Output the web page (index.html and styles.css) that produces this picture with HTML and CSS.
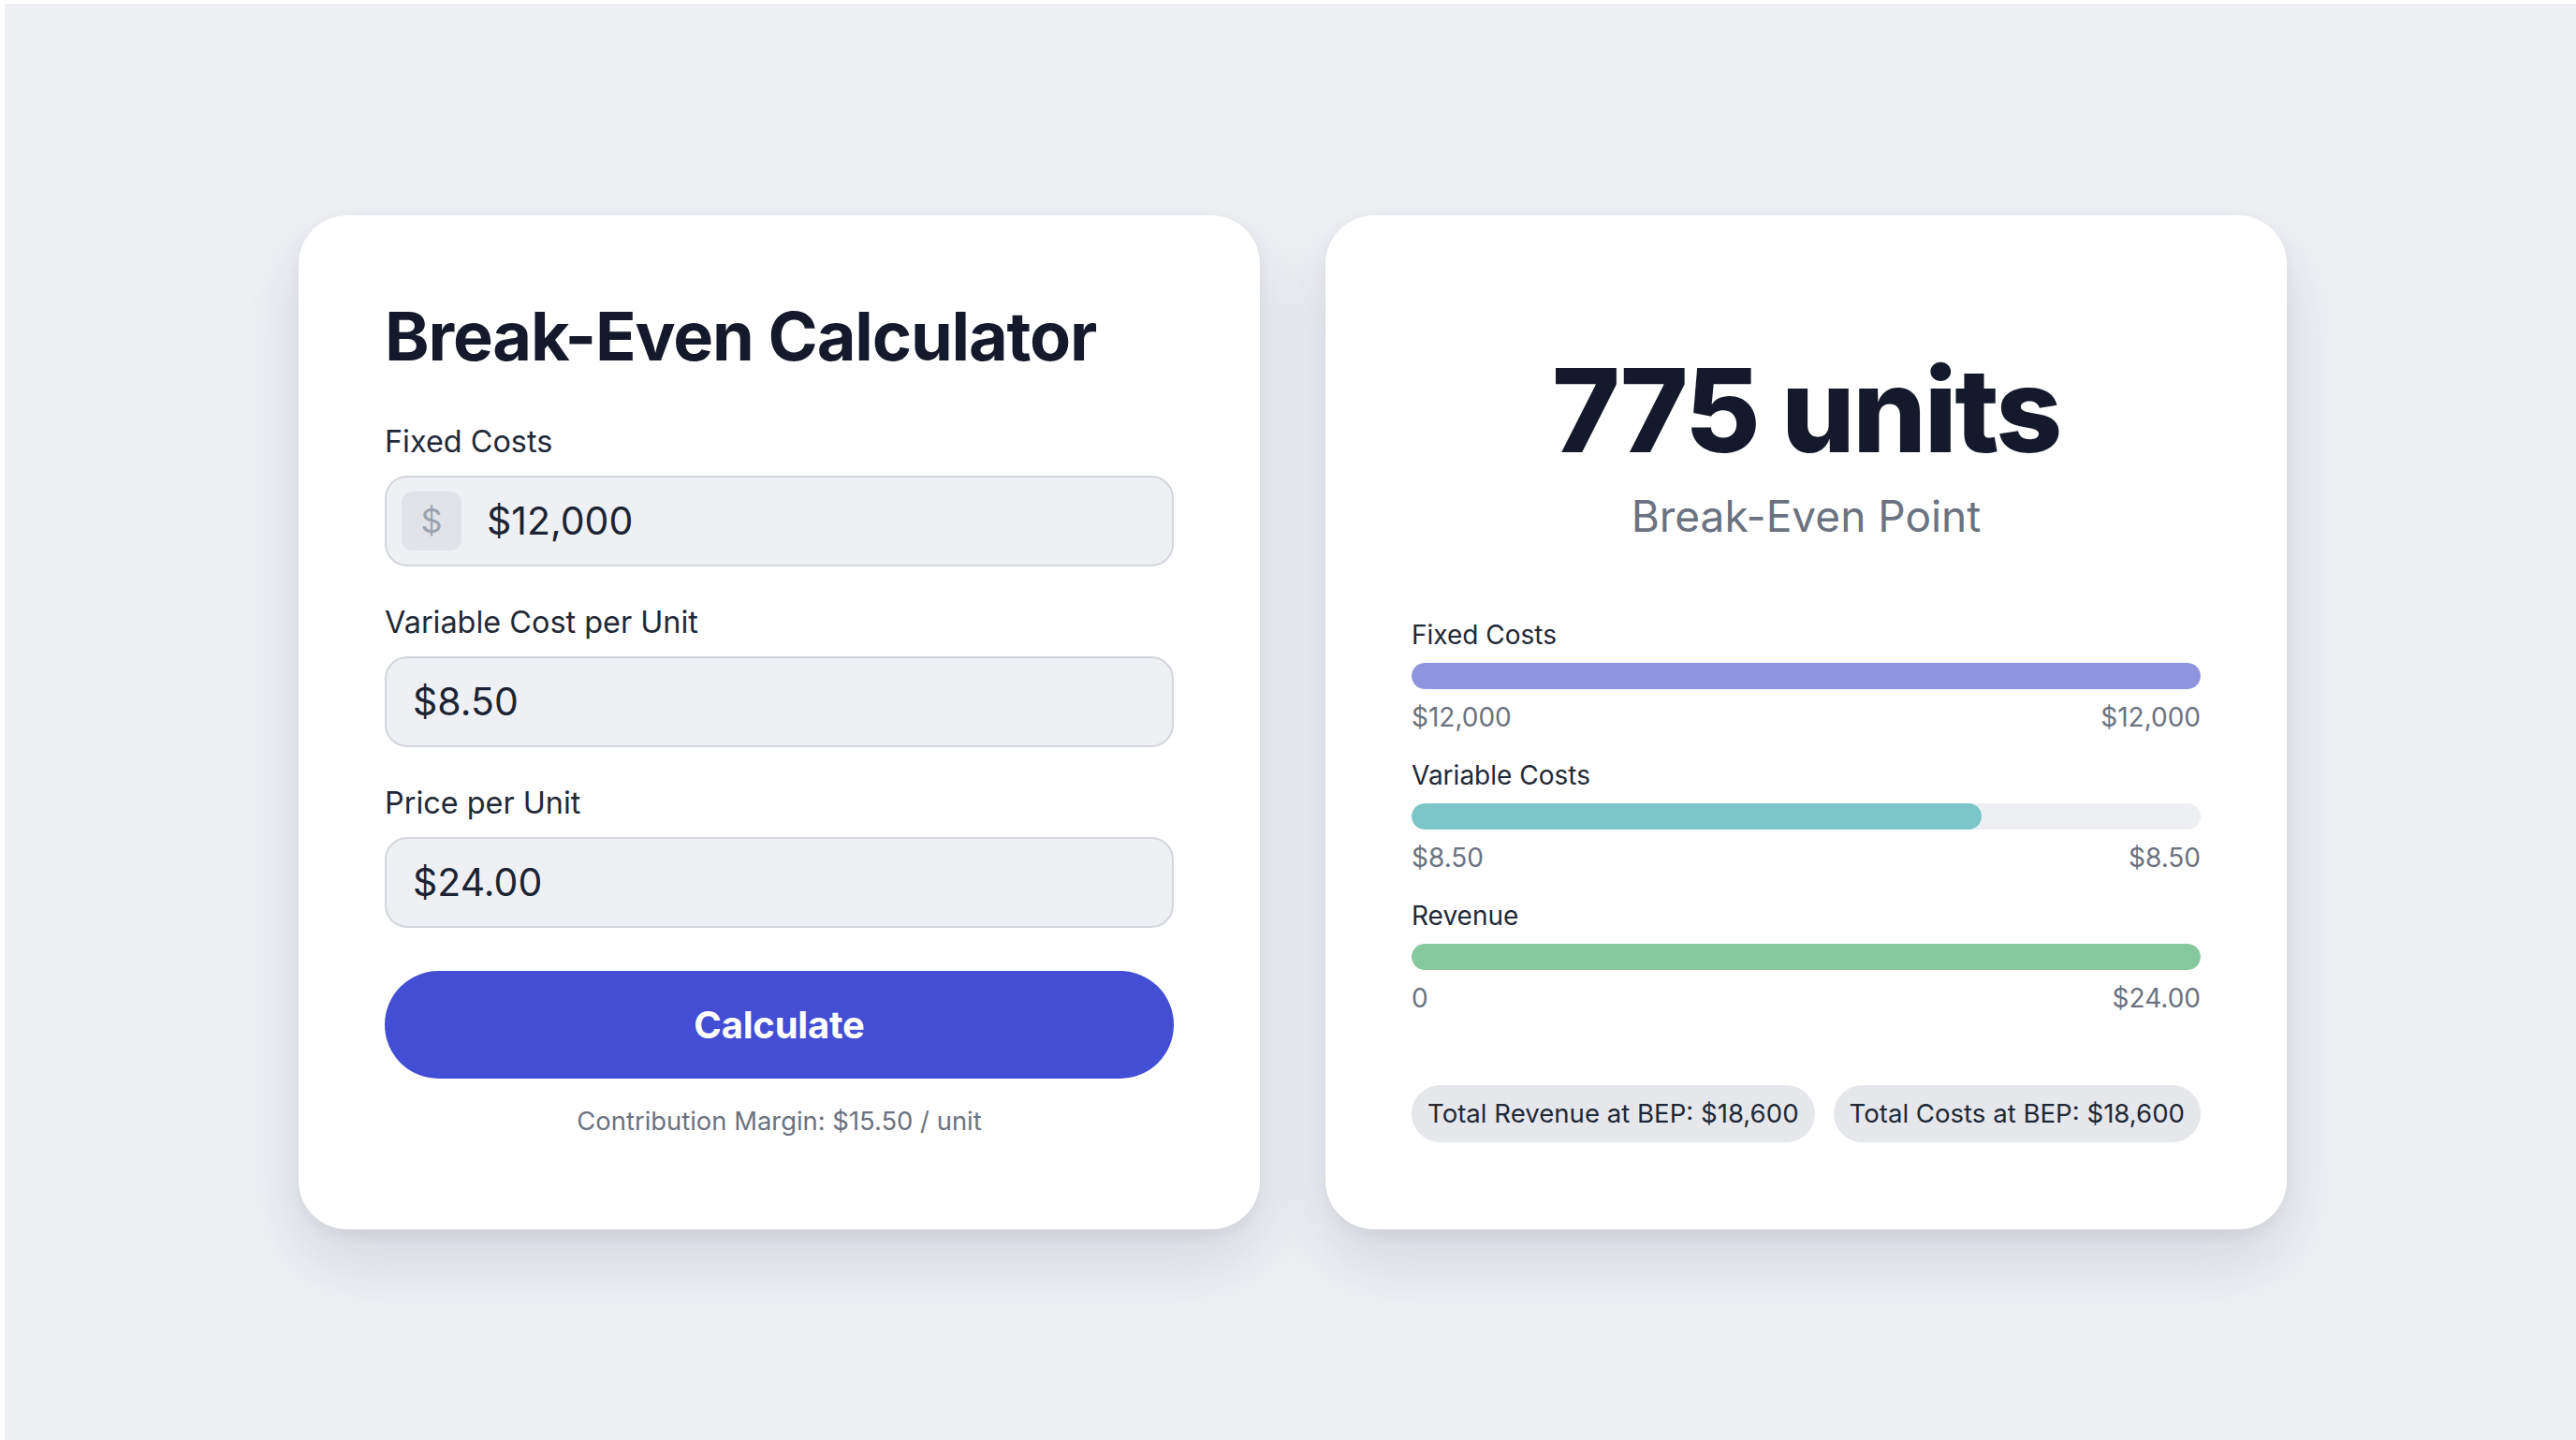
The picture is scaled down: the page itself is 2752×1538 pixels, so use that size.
FILE: index.html
```html
<!DOCTYPE html>
<html lang="en">
<head>
<meta charset="utf-8">
<title>Break-Even Calculator</title>
<link rel="stylesheet" href="styles.css">
</head>
<body>
<div class="page">
  <div class="cards">
    <section class="card calc">
      <h1 class="title">Break-Even Calculator</h1>
      <div class="field">
        <label class="label">Fixed Costs</label>
        <div class="input">
          <span class="prefix">$</span>
          <span class="value">$12,000</span>
        </div>
      </div>
      <div class="field">
        <label class="label">Variable Cost per Unit</label>
        <div class="input">
          <span class="value">$8.50</span>
        </div>
      </div>
      <div class="field">
        <label class="label">Price per Unit</label>
        <div class="input">
          <span class="value">$24.00</span>
        </div>
      </div>
      <button class="btn">Calculate</button>
      <p class="margin">Contribution Margin: $15.50 / unit</p>
    </section>

    <section class="card result">
      <div class="big">775 units</div>
      <div class="sub">Break-Even Point</div>
      <div class="bars">
        <div class="bar-group">
          <div class="bar-label">Fixed Costs</div>
          <div class="track"><div class="fill fill-fixed" style="width:100%"></div></div>
          <div class="bar-values"><span>$12,000</span><span>$12,000</span></div>
        </div>
        <div class="bar-group">
          <div class="bar-label">Variable Costs</div>
          <div class="track"><div class="fill fill-var" style="width:72.2%"></div></div>
          <div class="bar-values"><span>$8.50</span><span>$8.50</span></div>
        </div>
        <div class="bar-group">
          <div class="bar-label">Revenue</div>
          <div class="track"><div class="fill fill-rev" style="width:100%"></div></div>
          <div class="bar-values"><span>0</span><span>$24.00</span></div>
        </div>
      </div>
      <div class="pills">
        <span class="pill">Total Revenue at BEP: $18,600</span>
        <span class="pill">Total Costs at BEP: $18,600</span>
      </div>
    </section>
  </div>
</div>
</body>
</html>
```

FILE: styles.css
```css
* { box-sizing: border-box; }

html, body {
  margin: 0;
  padding: 0;
  background: #ffffff;
}

body {
  font-family: Inter, "Noto Sans", "Liberation Sans", sans-serif;
  color: #1f2937;
}

.page {
  margin: 4px 0 0 5px;
  height: 1534px;
  background: #eef0f4;
  display: flex;
  align-items: center;
  justify-content: center;
}

.cards {
  display: flex;
  gap: 70px;
  margin-left: 5px;
}

.card {
  width: 1027px;
  height: 1083px;
  background: #ffffff;
  border-radius: 52px;
  box-shadow: 0 34px 70px rgba(30, 41, 59, 0.13), 0 6px 16px rgba(30, 41, 59, 0.05);
  padding: 0 92px;
  display: flex;
  flex-direction: column;
}

/* Left card */
.calc { padding-top: 86px; }

.title {
  margin: 0 0 50px;
  font-size: 72px;
  line-height: 1.2;
  font-weight: 700;
  letter-spacing: -0.016em;
  color: #141a2b;
}

.field {
  display: flex;
  flex-direction: column;
  gap: 16px;
  margin-bottom: 40px;
}

.label {
  font-size: 32.4px;
  line-height: 40px;
  color: #1f2937;
}

.input {
  height: 97px;
  background: #eef0f4;
  border: 2px solid #d3d6dc;
  border-radius: 24px;
  display: flex;
  align-items: center;
  padding: 0 28px;
  gap: 27px;
}

.prefix {
  width: 64px;
  height: 63px;
  margin-left: -12px;
  background: #e1e3e8;
  border-radius: 12px;
  display: flex;
  align-items: center;
  justify-content: center;
  font-size: 36px;
  color: #9ca3af;
}

.value {
  font-size: 41px;
  color: #1c2333;
}

.btn {
  margin-top: 6px;
  height: 115px;
  border: none;
  border-radius: 58px;
  background: #434ed5;
  color: #ffffff;
  font-family: inherit;
  font-size: 40px;
  font-weight: 700;
  letter-spacing: -0.005em;
}

.margin {
  margin: 28px 0 0;
  text-align: center;
  font-size: 27.4px;
  line-height: 34px;
  color: #6b7280;
}

/* Right card */
.result { padding-top: 140px; }

.big {
  text-align: center;
  font-size: 124px;
  line-height: 136px;
  font-weight: 800;
  letter-spacing: -0.02em;
  color: #141a2b;
}

.sub {
  margin-top: 18px;
  text-align: center;
  font-size: 46px;
  line-height: 54px;
  color: #6b7280;
}

.bars {
  margin-top: 83px;
  display: flex;
  flex-direction: column;
  gap: 28px;
}

.bar-label {
  font-size: 28px;
  line-height: 34px;
  color: #1f2937;
}

.track {
  margin-top: 13px;
  height: 28px;
  border-radius: 14px;
  background: #eeeff3;
  overflow: hidden;
}

.fill {
  height: 100%;
  border-radius: 14px;
}

.fill-fixed { background: #8e94de; }
.fill-var { background: #7cc6ca; }
.fill-rev { background: #85c99c; }

.bar-values {
  margin-top: 13px;
  display: flex;
  justify-content: space-between;
  font-size: 28px;
  line-height: 34px;
  color: #6b7280;
}

.pills {
  margin-top: 76px;
  display: flex;
  justify-content: space-between;
}

.pill {
  height: 61px;
  padding: 0 17px;
  border-radius: 31px;
  background: #e6e7eb;
  display: flex;
  align-items: center;
  font-size: 27.6px;
  color: #1f2937;
}
```
